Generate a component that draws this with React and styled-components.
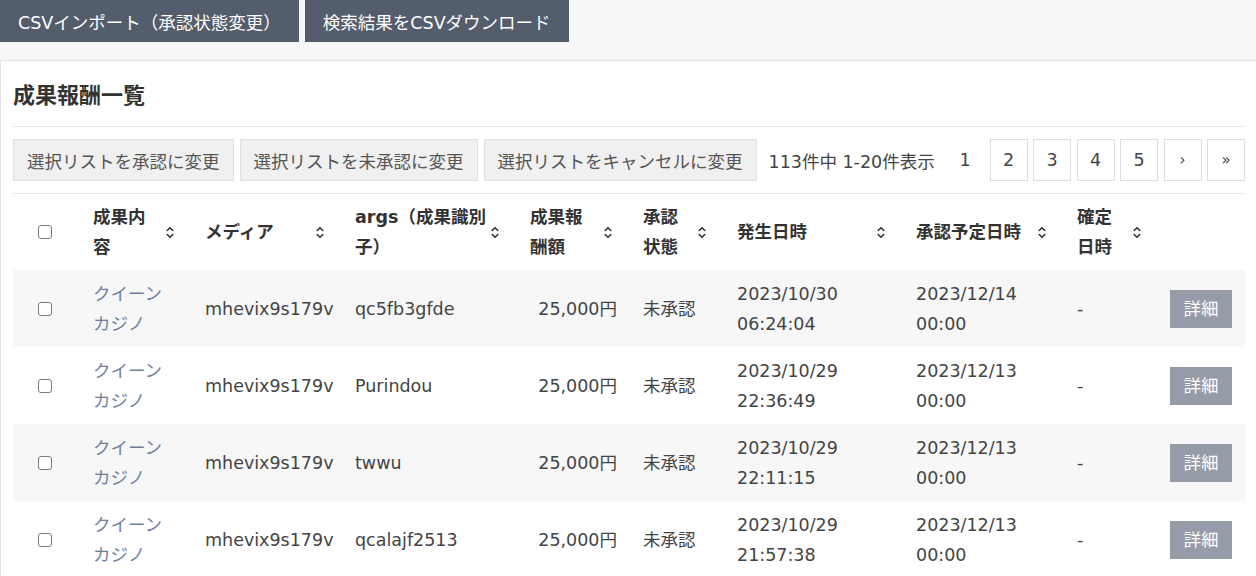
import React from 'react'
import styled, { createGlobalStyle } from 'styled-components'

const GlobalStyle = createGlobalStyle`
  html, body {
    margin: 0;
    padding: 0;
    background: #f7f7f7;
  }
  body {
    font-family: "DejaVu Sans", "Noto Sans CJK JP", sans-serif;
    font-size: 17.5px;
    color: #444;
    overflow: hidden;
  }
`

const TopBar = styled.div`
  display: flex;
  gap: 6px;
  height: 60px;
  align-items: flex-start;
`

const DarkButton = styled.button`
  height: 42px;
  padding: 0 18px;
  border: none;
  background: #535d6b;
  color: #fff;
  font: inherit;
  cursor: pointer;
`

const Panel = styled.section`
  background: #fff;
  border: 1px solid #e2e2e2;
  border-right: none;
  padding: 0 11px 0 12px;
  min-height: 520px;
`

const Title = styled.h1`
  margin: 0;
  padding: 22px 0 17px;
  line-height: 26px;
  font-size: 22px;
  font-weight: bold;
  color: #333;
  border-bottom: 1px solid #e6e6e6;
`

const Toolbar = styled.div`
  display: flex;
  align-items: center;
  margin-top: 12px;
  padding-bottom: 12px;
  border-bottom: 1px solid #e6e6e6;
`

const LightButton = styled.button`
  height: 42px;
  padding: 0 13px;
  margin-right: 6px;
  background: #f0f0f0;
  border: 1px solid #e2e2e2;
  color: #555;
  font: inherit;
  cursor: pointer;
`

const Info = styled.span`
  margin-left: 6px;
  color: #444;
  white-space: nowrap;
`

const Pager = styled.nav`
  display: flex;
  gap: 5.5px;
  margin-left: auto;
`

const PageItem = styled.a`
  display: flex;
  align-items: center;
  justify-content: center;
  width: 38px;
  height: 42px;
  box-sizing: border-box;
  border: 1px solid ${p => (p.$current ? 'transparent' : '#dedede')};
  background: #fff;
  color: #444;
  font-size: ${p => (p.$small ? '15px' : 'inherit')};
  text-decoration: none;
`

const Table = styled.table`
  width: 100%;
  border-collapse: collapse;
  table-layout: fixed;
`

const Col = styled.col`
  width: ${p => p.$w}px;
`

const Th = styled.th`
  height: 76px;
  padding: 0 ${p => (p.$bare ? 0 : 16)}px 0 ${p => (p.$bare ? 0 : 15)}px;
  text-align: left;
  font-weight: bold;
  color: #333;
  line-height: 30px;
  vertical-align: middle;
`

const HeadInner = styled.div`
  display: flex;
  align-items: center;
  justify-content: space-between;
  white-space: nowrap;
`

const Tr = styled.tr`
  background: ${p => (p.$striped ? '#f7f7f7' : '#fff')};
`

const Td = styled.td`
  height: 77px;
  padding: 0 ${p => (p.$right ? '11px' : '0')} 0 ${p => p.$pl ?? 15}px;
  line-height: 30px;
  vertical-align: middle;
  text-align: ${p => (p.$right ? 'right' : 'left')};
  white-space: nowrap;
`

const CheckCell = styled.div`
  padding-left: 25px;
  display: flex;
  align-items: center;
`

const Check = styled.input.attrs({ type: 'checkbox' })`
  appearance: none;
  margin: 0;
  width: 14px;
  height: 14px;
  border: 1px solid #7a7a7a;
  border-radius: 3px;
  background: #fff;
`

const Link = styled.a`
  color: #707e9c;
  text-decoration: none;
`

const DetailButton = styled.button`
  width: 62px;
  height: 38px;
  border: none;
  background: #959ca7;
  color: #fff;
  font: inherit;
  cursor: pointer;
`

const SortIcon = () => (
  <svg width="8" height="13" viewBox="0 0 8 13" fill="none" stroke="#333" strokeWidth="1.6" strokeLinecap="round" strokeLinejoin="round">
    <path d="M1.2 4.5 L4 1.7 L6.8 4.5" />
    <path d="M1.2 8.5 L4 11.3 L6.8 8.5" />
  </svg>
)

const columns = [
  { w: 65, check: true },
  { w: 112, label: ['成果内', '容'] },
  { w: 150, label: ['メディア'] },
  { w: 175, label: ['args（成果識別', '子）'] },
  { w: 113, label: ['成果報', '酬額'] },
  { w: 94, label: ['承認', '状態'] },
  { w: 179, label: ['発生日時'] },
  { w: 161, label: ['承認予定日時'] },
  { w: 95, label: ['確定', '日時'] },
  { w: 88 },
]

const rows = [
  { args: 'qc5fb3gfde', date: ['2023/10/30', '06:24:04'], plan: ['2023/12/14', '00:00'] },
  { args: 'Purindou', date: ['2023/10/29', '22:36:49'], plan: ['2023/12/13', '00:00'] },
  { args: 'twwu', date: ['2023/10/29', '22:11:15'], plan: ['2023/12/13', '00:00'] },
  { args: 'qcalajf2513', date: ['2023/10/29', '21:57:38'], plan: ['2023/12/13', '00:00'] },
]

const Lines = ({ items }) =>
  items.map((t, i) => (
    <React.Fragment key={i}>
      {i > 0 && <br />}
      {t}
    </React.Fragment>
  ))

export default function App() {
  return (
    <>
      <GlobalStyle />
      <TopBar>
        <DarkButton>CSVインポート（承認状態変更）</DarkButton>
        <DarkButton>検索結果をCSVダウンロード</DarkButton>
      </TopBar>
      <Panel>
        <Title>成果報酬一覧</Title>
        <Toolbar>
          <LightButton>選択リストを承認に変更</LightButton>
          <LightButton>選択リストを未承認に変更</LightButton>
          <LightButton>選択リストをキャンセルに変更</LightButton>
          <Info>113件中 1-20件表示</Info>
          <Pager>
            <PageItem $current>1</PageItem>
            <PageItem>2</PageItem>
            <PageItem>3</PageItem>
            <PageItem>4</PageItem>
            <PageItem>5</PageItem>
            <PageItem $small>›</PageItem>
            <PageItem $small>»</PageItem>
          </Pager>
        </Toolbar>
        <Table>
          <colgroup>
            {columns.map((c, i) => (
              <Col key={i} $w={c.w} />
            ))}
          </colgroup>
          <thead>
            <tr>
              {columns.map((c, i) => (
                <Th key={i} $bare={c.check}>
                  {c.check ? (
                    <CheckCell>
                      <Check />
                    </CheckCell>
                  ) : c.label ? (
                    <HeadInner>
                      <span>
                        <Lines items={c.label} />
                      </span>
                      <SortIcon />
                    </HeadInner>
                  ) : null}
                </Th>
              ))}
            </tr>
          </thead>
          <tbody>
            {rows.map((r, i) => (
              <Tr key={i} $striped={i % 2 === 0}>
                <Td $pl={0}>
                  <CheckCell>
                    <Check />
                  </CheckCell>
                </Td>
                <Td>
                  <Link href="#">
                    クイーン
                    <br />
                    カジノ
                  </Link>
                </Td>
                <Td>mhevix9s179v</Td>
                <Td>{r.args}</Td>
                <Td $right>25,000円</Td>
                <Td>未承認</Td>
                <Td>
                  <Lines items={r.date} />
                </Td>
                <Td>
                  <Lines items={r.plan} />
                </Td>
                <Td>-</Td>
                <Td $pl={13}>
                  <DetailButton>詳細</DetailButton>
                </Td>
              </Tr>
            ))}
          </tbody>
        </Table>
      </Panel>
    </>
  )
}
